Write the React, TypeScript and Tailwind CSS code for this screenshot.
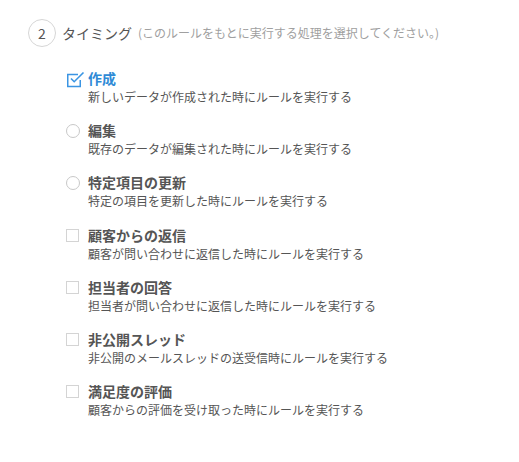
import React from 'react';

type Kind = 'checked' | 'radio' | 'box';

const items: { title: string; desc: string; kind: Kind }[] = [
  { title: '作成', desc: '新しいデータが作成された時にルールを実行する', kind: 'checked' },
  { title: '編集', desc: '既存のデータが編集された時にルールを実行する', kind: 'radio' },
  { title: '特定項目の更新', desc: '特定の項目を更新した時にルールを実行する', kind: 'radio' },
  { title: '顧客からの返信', desc: '顧客が問い合わせに返信した時にルールを実行する', kind: 'box' },
  { title: '担当者の回答', desc: '担当者が問い合わせに返信した時にルールを実行する', kind: 'box' },
  { title: '非公開スレッド', desc: '非公開のメールスレッドの送受信時にルールを実行する', kind: 'box' },
  { title: '満足度の評価', desc: '顧客からの評価を受け取った時にルールを実行する', kind: 'box' },
];

const Marker = ({ kind }: { kind: Kind }) => {
  if (kind === 'checked') {
    return (
      <svg width="19" height="18" viewBox="0 0 19 18" className="-mt-[2px]">
        <path d="M12 4.5H1.75v12h12.5V10" fill="none" stroke="#3b95e3" strokeWidth="1.5" />
        <path d="M5 8.5l3.2 3.2L17.5 2.5" fill="none" stroke="#3b95e3" strokeWidth="1.6" />
      </svg>
    );
  }
  if (kind === 'radio') {
    return <div className="w-[14px] h-[14px] rounded-full border border-[#c8c8c8] bg-white" />;
  }
  return <div className="w-[13px] h-[13px] border border-[#d4d4d4] bg-white" />;
};

const App = () => {
  return (
    <div
      className="w-[519px] h-[462px] bg-white pl-[28px] pt-[19px]"
      style={{ fontFamily: '"Noto Sans CJK JP", "Noto Sans", sans-serif' }}
    >
      {/* Header */}
      <div className="flex items-center">
        <div className="w-[28px] h-[28px] rounded-full border border-[#d6d6d6] flex items-center justify-center text-[14px] text-[#555]">
          2
        </div>
        <span className="ml-[6px] text-[14px] text-[#555]">タイミング</span>
        <span className="ml-[6px] text-[12px] text-[#a0a0a0]">(このルールをもとに実行する処理を選択してください。)</span>
      </div>

      {/* Options */}
      <div className="ml-[38px] mt-[22px] flex flex-col">
        {items.map((it) => (
          <div key={it.title} className="flex h-[52.2px]">
            <div className="w-[22px] pt-[3px] flex justify-start">
              <Marker kind={it.kind} />
            </div>
            <div className="flex flex-col">
              <span
                className={
                  'text-[14px] font-bold leading-[19px] ' +
                  (it.kind === 'checked' ? 'text-[#2f8ad6]' : 'text-[#555]')
                }
              >
                {it.title}
              </span>
              <span className="text-[12px] leading-[18px] text-[#555]">{it.desc}</span>
            </div>
          </div>
        ))}
      </div>
    </div>
  );
};

export default App;
